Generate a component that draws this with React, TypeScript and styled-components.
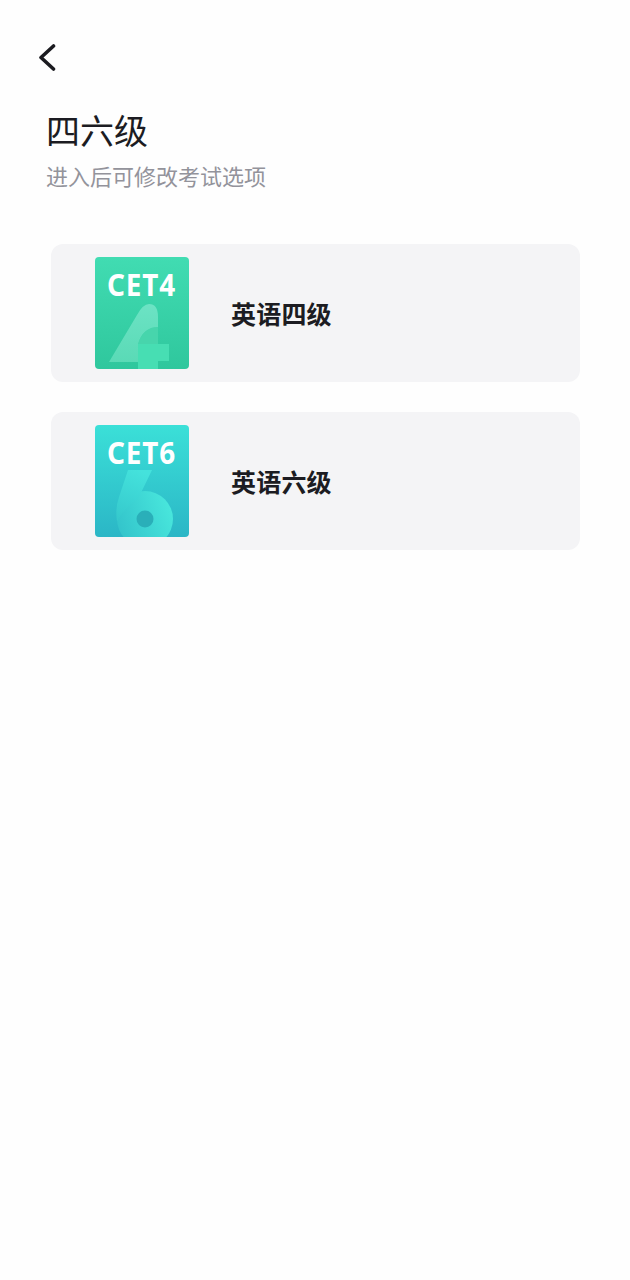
import React from "react";
import styled, { createGlobalStyle } from "styled-components";

const Global = createGlobalStyle`
  html, body { margin: 0; padding: 0; background: #fefefe; }
  body { font-family: "Noto Sans CJK SC", "Noto Sans", sans-serif; }
`;

const Page = styled.div`
  width: 630px;
  height: 1280px;
  box-sizing: border-box;
  padding: 44px 50px 0 46px;
  background: #fefefe;
  overflow: hidden;
`;

const BackButton = styled.div`
  width: 20px;
  height: 27px;
  margin-left: -9px;
  color: #1b1b20;
  svg { display: block; }
`;

const Title = styled.h1`
  margin: 38px 0 0;
  font-size: 34px;
  line-height: 42px;
  font-weight: 400;
  color: #1c1c22;
`;

const Subtitle = styled.p`
  margin: 8px 0 0;
  font-size: 22px;
  line-height: 32px;
  font-weight: 400;
  color: #93939b;
`;

const List = styled.div`
  margin: 53px 0 0 5px;
  display: flex;
  flex-direction: column;
  gap: 30px;
`;

const Card = styled.div`
  height: 138px;
  box-sizing: border-box;
  padding: 13px 44px;
  display: flex;
  align-items: flex-start;
  gap: 42px;
  background: #f4f4f6;
  border-radius: 12px;
`;

const Cover = styled.div<{ $from: string; $to: string }>`
  position: relative;
  width: 94px;
  height: 112px;
  flex: none;
  box-sizing: border-box;
  padding: 7px 1px 0 0;
  border-radius: 4px;
  overflow: hidden;
  background: linear-gradient(180deg, ${(p) => p.$from}, ${(p) => p.$to});
  svg { position: absolute; inset: 0; display: block; }
`;

const CoverLabel = styled.div`
  text-align: center;
  font-family: "Noto Sans", sans-serif;
  font-size: 31px;
  line-height: 40px;
  font-weight: 700;
  letter-spacing: 1px;
  color: #fff;
  transform: scaleX(0.9);
`;

const CardTitle = styled.span`
  margin-top: 39px;
  font-size: 25px;
  line-height: 34px;
  font-weight: 700;
  letter-spacing: 0.2px;
  color: #1c1c22;
`;

const Four = () => (
  <svg width="94" height="112" viewBox="0 0 94 112">
    <defs>
      <linearGradient id="fourA" x1="0" y1="0" x2="0" y2="1">
        <stop offset="0" stopColor="#6ce3c4" />
        <stop offset="1" stopColor="#5adab6" />
      </linearGradient>
    </defs>
    <path d="M63 87 V70 Q48 70 43 87 Z" fill="#47d5ac" />
    <path d="M14 105 L42 58 Q48 47 54 47 Q63 47 63 60 V70 Q48 70 43 87 V105 Z" fill="url(#fourA)" />
    <path d="M43 112 V87 H74 V104 H63 V112 Z" fill="#47deb3" />
  </svg>
);

const Six = () => (
  <svg width="94" height="112" viewBox="0 0 94 112">
    <defs>
      <linearGradient id="sixStem" x1="0.6" y1="0" x2="0.3" y2="1">
        <stop offset="0" stopColor="#44e2dc" />
        <stop offset="1" stopColor="#36cacd" />
      </linearGradient>
      <linearGradient id="sixBowl" x1="1" y1="0.4" x2="0" y2="0.8">
        <stop offset="0" stopColor="#48e6dc" />
        <stop offset="1" stopColor="#32c2ca" />
      </linearGradient>
    </defs>
    <circle cx="50" cy="94" r="28" fill="url(#sixBowl)" />
    <path d="M33 45 H57 L43 74 Q30 82 22 96 Q20 84 24 72 Z" fill="url(#sixStem)" />
    <circle cx="50" cy="94" r="8.5" fill="#2aafb9" />
  </svg>
);

export default function App() {
  return (
    <Page>
      <Global />
      <BackButton>
        <svg width="20" height="27" viewBox="0 0 20 27" fill="none">
          <path d="M16.5 2 L4 13.5 L16.5 25" stroke="currentColor" strokeWidth="3.6" strokeLinecap="round" strokeLinejoin="round" />
        </svg>
      </BackButton>
      <Title>四六级</Title>
      <Subtitle>进入后可修改考试选项</Subtitle>
      <List>
        <Card>
          <Cover $from="#41dcb2" $to="#2fc79d">
            <Four />
            <CoverLabel>CET4</CoverLabel>
          </Cover>
          <CardTitle>英语四级</CardTitle>
        </Card>
        <Card>
          <Cover $from="#3be0d8" $to="#2bb6c6">
            <Six />
            <CoverLabel>CET6</CoverLabel>
          </Cover>
          <CardTitle>英语六级</CardTitle>
        </Card>
      </List>
    </Page>
  );
}
